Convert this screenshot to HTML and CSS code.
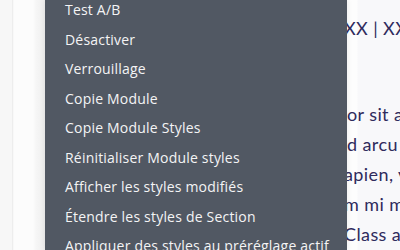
FILE: index.html
```html
<!DOCTYPE html>
<html lang="fr">
<head>
<meta charset="utf-8">
<link rel="stylesheet" href="styles.css">
</head>
<body>
<div class="layout">
  <aside class="side"></aside>
  <main class="page">
    <p class="meta"><span class="cut">XX | XX</span></p>
    <div class="para">
      <p class="line">or sit amet</p>
      <p class="line">d arcu nunc</p>
      <p class="line"><span class="cut">apien, vel</span></p>
      <p class="line"><span class="cut">m mi maur</span></p>
      <p class="line"><span class="cut">Class apt</span></p>
    </div>
  </main>
</div>
<nav class="ctx-menu">
  <ul class="ctx-list">
    <li>Test A/B</li>
    <li>Désactiver</li>
    <li>Verrouillage</li>
    <li>Copie Module</li>
    <li>Copie Module Styles</li>
    <li>Réinitialiser Module styles</li>
    <li>Afficher les styles modifiés</li>
    <li>Étendre les styles de Section</li>
    <li>Appliquer des styles au préréglage actif</li>
  </ul>
</nav>
</body>
</html>
```
FILE: styles.css
```css
html, body {
  margin: 0;
  padding: 0;
  height: 100%;
  overflow: hidden;
}
body {
  background: #f8f8f9;
}
.layout {
  display: flex;
  height: 250px;
}
.side {
  width: 45px;
  flex: none;
  background: linear-gradient(to right,
    #f7f7f7 0, #f7f7f7 12px,
    #e6e6e6 12px, #f4f4f4 13px,
    #fcfcfc 14px, #fcfcfc 33px,
    #f6f6f6 36px, #eeeeee 45px);
}
.page {
  flex: 1;
  padding-left: 302px;
  background: linear-gradient(to right, #fdfdfd 0, #fdfdfd 312px, #f8f8fa 313px);
  font-family: Lato, "Open Sans", sans-serif;
  font-size: 18px;
  letter-spacing: 0.4px;
  line-height: 30px;
  color: #2f2b5d;
  white-space: nowrap;
  overflow: hidden;
}
.meta {
  margin: 13px 0 0 0;
}
.para {
  margin-top: 56px;
}
.line {
  margin: 0;
}
.cut {
  margin-left: -3px;
}
.ctx-menu {
  position: absolute;
  left: 45px;
  top: 0;
  width: 302px;
  height: 250px;
  background: #515863;
  box-shadow: 0 0 6px rgba(0, 0, 0, 0.08);
  overflow: hidden;
}
.ctx-list {
  list-style: none;
  margin: -5px 0 0 0;
  padding: 0;
  font-family: "Open Sans", sans-serif;
  font-size: 14px;
  font-weight: 500;
  letter-spacing: 0.2px;
  line-height: 29.5px;
  color: #f4f4f5;
  white-space: nowrap;
}
.ctx-list li {
  padding-left: 20px;
}
```
